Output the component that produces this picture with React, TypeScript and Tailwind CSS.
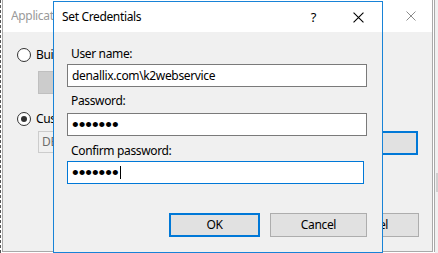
import React from "react";

function XIcon({ color, size = 10 }: { color: string; size?: number }) {
  return (
    <svg width={size} height={size} viewBox="0 0 10 10" className="block">
      <path d="M0.5 0.5 L9.5 9.5 M9.5 0.5 L0.5 9.5" stroke={color} strokeWidth="1" fill="none" />
    </svg>
  );
}

function Dots() {
  return (
    <span className="font-['Liberation_Sans',sans-serif] text-[19px] leading-none tracking-[0px] text-black">
      •••••••
    </span>
  );
}

export default function App() {
  return (
    <div className="relative w-[438px] h-[253px] overflow-hidden bg-white font-['Noto_Sans',sans-serif] text-[12px] tracking-[-0.35px] text-black">
      <div className="flex h-full">
        {/* left ruler ticks */}
        <div className="w-[2px] h-full border-l border-dashed border-[#555] shrink-0" />
        {/* background window */}
        <div className="w-[431px] h-[252px] shrink-0 border-x border-b border-[#a9a9a9] flex flex-col bg-[#f0f0f0]">
          <div className="h-[32px] shrink-0 bg-white flex items-center pl-[8px] pr-[16px] text-[#9a9a9a]">
            <span className="w-[46px] overflow-hidden whitespace-nowrap">Applicat</span>
            <div className="ml-auto">
              <XIcon color="#8c8c8c" />
            </div>
          </div>
          <div className="flex flex-col flex-1">
            {/* radio 1 */}
            <div className="mt-[15px] ml-[14px] h-[16px] flex items-center gap-[5px]">
              <span className="w-[14px] h-[14px] shrink-0 rounded-full border border-[#333] bg-white" />
              <span className="w-[20px] overflow-hidden whitespace-nowrap">Bui</span>
            </div>
            <div className="mt-[8px] ml-[35px] w-[20px] h-[23px] bg-[#cccccc] border border-[#bfbfbf]" />
            {/* radio 2 */}
            <div className="mt-[17px] ml-[14px] h-[16px] flex items-center gap-[5px]">
              <span className="w-[14px] h-[14px] shrink-0 rounded-full border border-[#333] bg-white flex items-center justify-center">
                <span className="w-[6px] h-[6px] rounded-full bg-[#333]" />
              </span>
              <span className="w-[20px] overflow-hidden whitespace-nowrap">Cus</span>
            </div>
            <div className="mt-[4px] flex items-start">
              <div className="ml-[35px] w-[22px] h-[22px] overflow-hidden whitespace-nowrap border border-[#cccccc] bg-[#f0f0f0] flex items-center pl-[3px] text-[#6d6d6d]">
                DE
              </div>
              <div className="ml-auto mr-[14px] w-[96px] h-[24px] border-2 border-[#0078d7] bg-[#e1e1e1]" />
            </div>
            <div className="mt-auto mb-[14px] flex justify-end">
              <div className="mr-[13px] w-[97px] h-[24px] border border-[#adadad] bg-[#e1e1e1] flex items-center justify-center">
                Cancel
              </div>
            </div>
          </div>
        </div>
        <div className="w-[1px] shrink-0" />
        <div className="w-[1px] h-[252px] shrink-0 bg-[#a9a9a9]" />
        <div className="flex-1 bg-[#f0f0f0] flex flex-col">
          <div className="mt-[173px] h-[19px] ml-[1px] bg-[#d0d0d0]" />
        </div>
      </div>

      {/* Set Credentials dialog */}
      <div className="absolute left-[53px] top-[1px] w-[330px] h-[252px] border border-[#1883d7] flex flex-col bg-[#f0f0f0]">
        <div className="h-[30px] shrink-0 bg-white flex items-center pl-[8px]">
          <span>Set Credentials</span>
          <span className="ml-auto text-[13px] leading-none">?</span>
          <div className="ml-[37px] mr-[18px]">
            <XIcon color="#000" size={11} />
          </div>
        </div>
        <div className="flex flex-col">
          <div className="mt-[14px] ml-[17px] h-[16px] leading-[16px]">User name:</div>
          <div className="mt-[2px] ml-[13px] w-[300px] h-[23px] bg-white border border-[#7a7a7a] flex items-center pl-[4px]">
            {"denallix.com\\k2webservice"}
          </div>
          <div className="mt-[6px] ml-[17px] h-[16px] leading-[16px]">Password:</div>
          <div className="mt-[4px] ml-[13px] w-[300px] h-[23px] bg-white border border-[#7a7a7a] flex items-center pl-[4px]">
            <Dots />
          </div>
          <div className="mt-[7px] ml-[17px] h-[16px] leading-[16px]">Confirm password:</div>
          <div className="mt-[2px] ml-[13px] w-[297px] h-[23px] bg-white border border-[#0078d7] flex items-center pl-[4px]">
            <Dots />
            <span className="ml-[1px] w-[1px] h-[13px] bg-black" />
          </div>
          <div className="mt-[29px] flex justify-end gap-[10px] mr-[15px]">
            <div className="w-[91px] h-[24px] border-2 border-[#0078d7] bg-[#e1e1e1] flex items-center justify-center">
              OK
            </div>
            <div className="w-[97px] h-[24px] border border-[#adadad] bg-[#e1e1e1] flex items-center justify-center">
              Cancel
            </div>
          </div>
        </div>
      </div>
    </div>
  );
}
